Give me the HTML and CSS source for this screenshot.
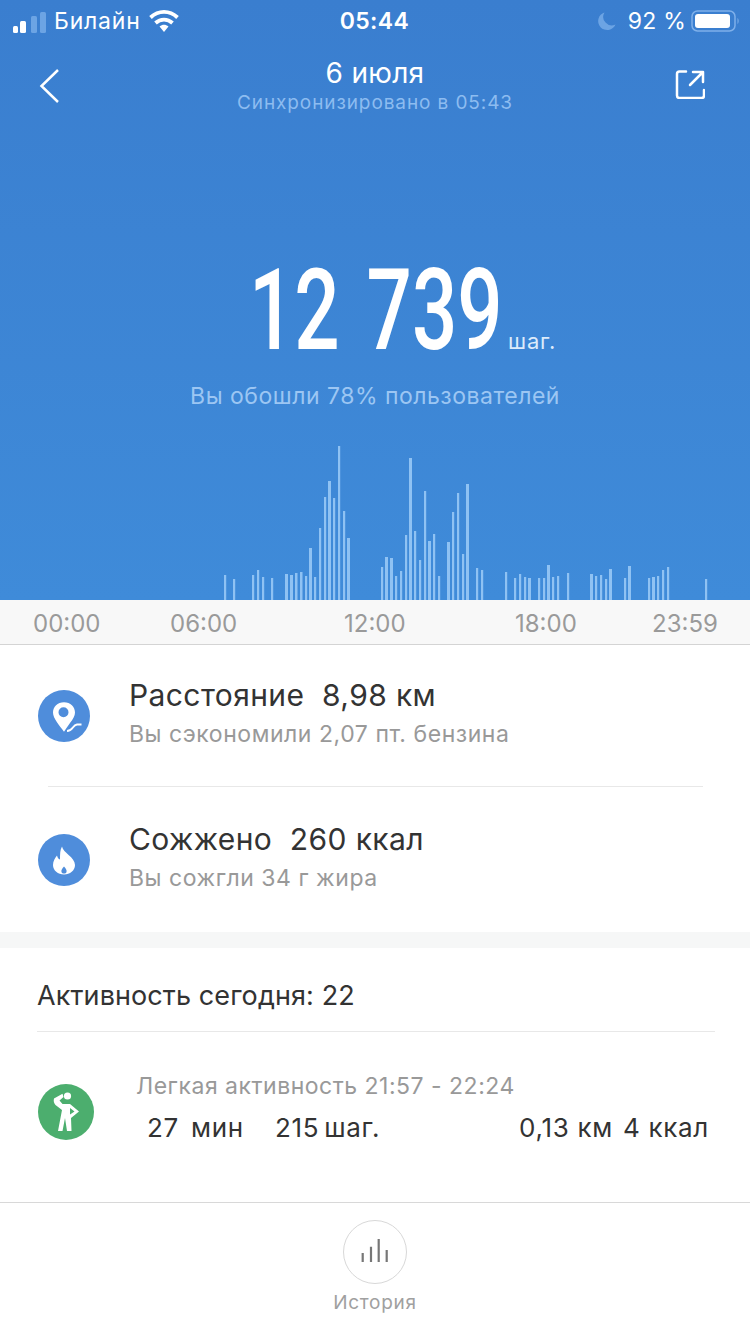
FILE: index.html
```html
<!DOCTYPE html>
<html lang="ru">
<head>
<meta charset="utf-8">
<title>Шаги</title>
<link rel="stylesheet" href="styles.css">
</head>
<body>
<div class="page">
  <section class="hero">
    <div class="status">
      <div class="status-left">
        <svg class="signal" width="34" height="26" viewBox="0 0 34 26"><rect class="on" x="1" y="18" width="5" height="7" rx="1.500"/><rect class="on" x="8" y="13" width="6" height="12" rx="1.500"/><rect class="off" x="19" y="8" width="6" height="17" rx="1.500"/><rect class="off" x="28" y="4" width="6" height="21" rx="1.500"/></svg>
        <span class="carrier">Билайн</span>
        <svg class="wifi" width="30" height="24" viewBox="0 0 30 24"><path d="M1.500 8.500C9.500 1 20.500 1 28.500 8.500" /><path d="M6.500 14C11.500 9.500 18.500 9.500 23.500 14"/><path class="wifi-tip" d="M10.500 17.500C13.500 15 16.500 15 19.500 17.500L15 23Z"/></svg>
      </div>
      <span class="clock">05:44</span>
      <div class="status-right">
        <svg class="moon" width="20" height="20" viewBox="0 0 20 20"><path d="M7.500 1.500A9 9 0 1 0 18.500 13.500A8.500 8.500 0 0 1 7.500 1.500Z"/></svg>
        <span class="battery-text">92 %</span>
        <svg class="battery" width="50" height="24" viewBox="0 0 50 24"><rect class="bat-shell" x="1" y="2" width="43" height="20" rx="5.500"/><rect class="bat-fill" x="4" y="5" width="35" height="14" rx="3"/><path class="bat-nub" d="M46.500 9C48 9.800 48 14.200 46.500 15Z"/></svg>
      </div>
    </div>
    <div class="nav">
      <svg class="back" width="24" height="36" viewBox="0 0 24 36"><path d="M20 2L3.500 18L20 34"/></svg>
      <div class="nav-title">
        <div class="date">6 июля</div>
        <div class="sync">Синхронизировано в 05:43</div>
      </div>
      <svg class="share" width="30" height="30" viewBox="0 0 30 30"><path d="M11 2.500H4.500Q2 2.500 2 5V26.500Q2 29 4.500 29H26.500Q29 29 29 26.500V21"/><path d="M15 16L28 3M18 3H28V13"/></svg>
    </div>
    <div class="steps">
      <span class="steps-num"><span class="steps-inner">12 739</span></span>
      <span class="steps-unit">шаг.</span>
    </div>
    <div class="rank">Вы обошли 78% пользователей</div>
    <svg class="chart" width="750" height="156" viewBox="0 444 750 156">
      <g class="bars">
        <rect x="224" y="575" width="2.200" height="25"/><rect x="233" y="579" width="2.200" height="21"/>
        <rect x="252" y="575" width="2.200" height="25"/><rect x="257" y="570" width="2.200" height="30"/><rect x="262" y="577" width="2.200" height="23"/><rect x="271" y="578" width="2.200" height="22"/>
        <rect x="285" y="574" width="3" height="26"/><rect x="290" y="575" width="3" height="25"/><rect x="295" y="573" width="2.500" height="27"/><rect x="300" y="572" width="2.500" height="28"/><rect x="305" y="576" width="2.200" height="24"/><rect x="309" y="548" width="3" height="52"/><rect x="314" y="577" width="2.200" height="23"/><rect x="319" y="528" width="2.200" height="72"/><rect x="324" y="497" width="2.200" height="103"/><rect x="328" y="481" width="3" height="119"/><rect x="333" y="498" width="2.200" height="102"/><rect x="338" y="446" width="2.200" height="154"/><rect x="343" y="511" width="2.200" height="89"/><rect x="347" y="538" width="3" height="62"/>
        <rect x="381" y="567" width="2.200" height="33"/><rect x="385" y="557" width="3" height="43"/><rect x="390" y="558" width="3" height="42"/><rect x="395" y="576" width="2.200" height="24"/><rect x="400" y="571" width="2.200" height="29"/><rect x="405" y="535" width="2.200" height="65"/><rect x="409" y="458" width="3" height="142"/><rect x="414" y="531" width="2.200" height="69"/><rect x="419" y="560" width="2.200" height="40"/><rect x="424" y="491" width="2.200" height="109"/><rect x="428" y="541" width="3" height="59"/><rect x="433" y="534" width="2.200" height="66"/><rect x="438" y="576" width="2.200" height="24"/><rect x="447" y="542" width="3" height="58"/><rect x="452" y="512" width="2.200" height="88"/><rect x="457" y="493" width="2.200" height="107"/><rect x="462" y="554" width="2.200" height="46"/><rect x="466" y="484" width="3" height="116"/>
        <rect x="476" y="568" width="2.200" height="32"/><rect x="481" y="570" width="2.200" height="30"/><rect x="505" y="572" width="2.200" height="28"/><rect x="514" y="578" width="2.200" height="22"/><rect x="519" y="574" width="2.200" height="26"/><rect x="524" y="577" width="2.200" height="23"/><rect x="528" y="578" width="3" height="22"/><rect x="538" y="578" width="2.200" height="22"/><rect x="543" y="578" width="2.200" height="22"/><rect x="547" y="565" width="3" height="35"/><rect x="552" y="577" width="2.200" height="23"/><rect x="557" y="576" width="2.200" height="24"/><rect x="567" y="573" width="2.200" height="27"/>
        <rect x="590" y="574" width="3" height="26"/><rect x="595" y="576" width="2.200" height="24"/><rect x="600" y="575" width="2.200" height="25"/><rect x="605" y="579" width="2.200" height="21"/><rect x="609" y="569" width="3" height="31"/><rect x="624" y="578" width="2.200" height="22"/><rect x="628" y="566" width="3" height="34"/><rect x="648" y="578" width="2.200" height="22"/><rect x="652" y="577" width="3" height="23"/><rect x="657" y="576" width="2.200" height="24"/><rect x="662" y="570" width="2.200" height="30"/><rect x="667" y="567" width="2.200" height="33"/><rect x="705" y="579" width="2.200" height="21"/>
      </g>
    </svg>
  </section>

  <div class="times">
    <span>00:00</span><span>06:00</span><span>12:00</span><span>18:00</span><span>23:59</span>
  </div>

  <section class="stats">
    <div class="stat stat-first">
      <svg class="stat-icon" width="52" height="52" viewBox="0 0 52 52"><circle class="disc-blue" cx="26" cy="26" r="26"/><path class="glyph" fill-rule="evenodd" d="M26 12.300C19.500 12.300 15 17 15 22.500C15 28.500 21.500 35.500 26 41.700C27.800 39 29.800 36 32 33C35 29 37 26 37 22.500C37 17 32.500 12.300 26 12.300ZM25.500 17.300A5 5 0 1 1 25.500 27.300A5 5 0 1 1 25.500 17.300Z"/><path class="glyph-line" d="M29 41C35 41 34.500 35 39 34.500H43.500"/></svg>
      <div class="stat-body">
        <div class="stat-title">Расстояние&nbsp; 8,98 км</div>
        <div class="stat-sub">Вы сэкономили 2,07 пт. бензина</div>
      </div>
    </div>
    <div class="stat">
      <svg class="stat-icon" width="52" height="52" viewBox="0 0 52 52"><circle class="disc-blue" cx="26" cy="26" r="26"/><path class="glyph" fill-rule="evenodd" d="M24 12.500C25 19 37 23 37 31C37 36.500 32 40.500 26 40.500C20 40.500 15 36.500 15 31C15 27 17 24 19 21.500C19.500 24 20.500 25 22 25.500C22 20 22 16 24 12.500ZM26 32.500C24 34.500 23 36.500 23.500 38C24 40 28 40 28.500 38C29 36.500 28 34.500 26 32.500Z"/></svg>
      <div class="stat-body">
        <div class="stat-title">Сожжено&nbsp; 260 ккал</div>
        <div class="stat-sub">Вы сожгли 34 г жира</div>
      </div>
    </div>
  </section>

  <section class="activity">
    <h2 class="activity-head">Активность сегодня: 22</h2>
    <div class="activity-row">
      <svg class="stat-icon" width="56" height="56" viewBox="0 0 56 56"><circle class="disc-green" cx="28" cy="28" r="28"/><circle class="glyph" cx="29.500" cy="12" r="3.600"/><path class="glyph" fill-rule="evenodd" d="M16 14.500L24.500 9.800L25.500 13L21.500 16.500L24.500 20H32L41 27.500L33 34L33.500 47H29L27 34L24.500 47H20L24 26L17.500 21Q15 18 16 14.500ZM32 24V30.500L36.500 27.500Z"/></svg>
      <div class="activity-body">
        <div class="activity-title">Легкая активность 21:57 - 22:24</div>
        <div class="activity-data">
          <span class="d-min">27&nbsp; мин</span>
          <span class="d-steps">215<span class="d-unit">шаг.</span></span>
          <span class="d-km">0,13 км</span>
          <span class="d-kcal">4 ккал</span>
        </div>
      </div>
    </div>
  </section>

  <nav class="tabbar">
    <div class="tab-circle">
      <svg width="30" height="28" viewBox="0 0 30 28"><path d="M2.700 15V24M11 8.700V24M18.700 1V24M26.700 12V24"/></svg>
    </div>
    <div class="tab-label">История</div>
  </nav>
</div>
</body>
</html>
```

FILE: styles.css
```css
* { box-sizing: border-box; }
html, body { margin: 0; padding: 0; background: #fff; }
body { font-family: Inter, "Noto Sans", sans-serif; }
.page { width: 750px; height: 1334px; overflow: hidden; display: flex; flex-direction: column; }

.hero { height: 600px; background: linear-gradient(180deg, #3a7ecf 0%, #3f8bd9 100%); color: #fff; display: flex; flex-direction: column; position: relative; }
.status { height: 42px; display: grid; grid-template-columns: 1fr auto 1fr; align-items: center; padding: 0 9px 0 8px; }
.status-left { display: flex; align-items: center; padding-left: 4px; }
.signal .on { fill: #fff; }
.signal .off { fill: #6ca4e4; }
.signal { margin-right: 8px; }
.carrier { font-size: 23px; letter-spacing: 0.8px; margin-right: 8px; }
.wifi path { fill: none; stroke: #fff; stroke-width: 3.800; }
.wifi .wifi-tip { fill: #fff; stroke: none; }
.clock { font-size: 23px; font-weight: 600; letter-spacing: 0.4px; }
.status-right { display: flex; align-items: center; justify-content: flex-end; }
.moon { fill: #6ca4e4; margin-right: 11px; }
.battery-text { font-size: 23px; letter-spacing: 0.2px; margin-right: 5px; }
.bat-shell { fill: none; stroke: #7fb0ea; stroke-width: 1.500; }
.bat-fill { fill: #fff; }
.bat-nub { fill: #7fb0ea; }

.nav { height: 80px; display: grid; grid-template-columns: 1fr auto 1fr; align-items: start; padding: 0 38px; }
.back { margin-top: 26px; fill: none; stroke: #fff; stroke-width: 2.500; }
.share { justify-self: end; margin: 27px 7px 0 0; fill: none; stroke: #fff; stroke-width: 2.500; stroke-linecap: round; stroke-linejoin: round; }
.nav-title { text-align: center; padding-top: 13px; }
.date { font-size: 28px; line-height: 36px; letter-spacing: 0.3px; }
.sync { font-size: 19px; line-height: 24px; color: #8dbcf0; letter-spacing: 0.9px; }

.steps { margin-top: 123px; height: 130px; position: relative; }
.steps-num { position: absolute; left: 249px; top: 0; width: 253px; display: block; font-family: Roboto, sans-serif; font-weight: 500; font-size: 114px; line-height: 130px; }
.steps-inner { display: inline-block; transform-origin: 0 50%; transform: scaleX(.70); white-space: nowrap; word-spacing: 10px; }
.steps-unit { position: absolute; left: 508px; top: 81px; font-size: 22px; line-height: 30px; color: #dcebfb; letter-spacing: 0.8px; }
.rank { margin-top: 6px; text-align: center; font-size: 23px; line-height: 30px; color: #9cc6f3; letter-spacing: 0.5px; }
.chart { position: absolute; left: 0; bottom: 0; display: block; }
.bars rect { fill: #8fc2f3; }

.times { height: 45px; background: #f8f8f8; border-bottom: 1px solid #d4d4d4; display: grid; grid-template-columns: 137px 174px 171px 137px auto; padding: 10px 0 0 33px; font-size: 24px; line-height: 28px; color: #9a9a9a; }

.stats { height: 303px; border-bottom: 16px solid #f6f7f7; display: flex; flex-direction: column; }
.stat { flex: 1; display: flex; align-items: center; padding-left: 38px; gap: 39px; }
.stat-first { flex: none; height: 142px; position: relative; }
.stat-first::after { content: ""; position: absolute; left: 48px; right: 47px; bottom: 0; height: 1px; background: #e8e8e8; }
.stat-icon { flex: none; display: block; }
.disc-blue { fill: #4f8ddb; }
.disc-green { fill: #4cae6e; }
.glyph { fill: #fff; }
.glyph-line { fill: none; stroke: #fff; stroke-width: 2; }
.stat-body { padding-bottom: 7px; }
.stat-title { font-size: 30px; line-height: 40px; color: #333; letter-spacing: 0.4px; }
.stat-sub { font-size: 23px; line-height: 32px; margin-top: 3px; color: #999; letter-spacing: 0.55px; }

.activity { flex: 1; padding: 0 35px 0 37px; }
.activity-head { margin: 0; height: 84px; padding-top: 30px; font-weight: 400; font-size: 27px; line-height: 36px; color: #333; border-bottom: 1px solid #e8e8e8; letter-spacing: 0.1px; }
.activity-row { display: flex; align-items: flex-start; padding-top: 40px; }
.activity-row .stat-icon { margin: 12px 42px 0 1px; }
.activity-body { flex: 1; }
.activity-title { font-size: 23px; line-height: 28px; color: #999; letter-spacing: 0.5px; }
.activity-data { display: flex; align-items: baseline; margin-top: 10px; font-size: 26px; line-height: 36px; color: #333; padding-left: 11px; letter-spacing: 0.7px; }
.d-min { word-spacing: -2px; }
.d-steps { margin-left: 31px; }
.d-unit { margin-left: 5px; }
.d-km { margin-left: auto; }
.d-kcal { margin-left: 10px; margin-right: 6px; }

.tabbar { height: 132px; border-top: 1px solid #d8d8d8; display: flex; flex-direction: column; align-items: center; padding-top: 17px; }
.tab-circle { width: 64px; height: 64px; border: 1px solid #d8d8d8; border-radius: 50%; display: flex; align-items: center; justify-content: center; }
.tab-circle path { fill: none; stroke: #777; stroke-width: 2.200; }
.tab-label { margin-top: 6px; font-size: 19px; line-height: 26px; color: #a0a0a0; letter-spacing: 0.7px; }
```
